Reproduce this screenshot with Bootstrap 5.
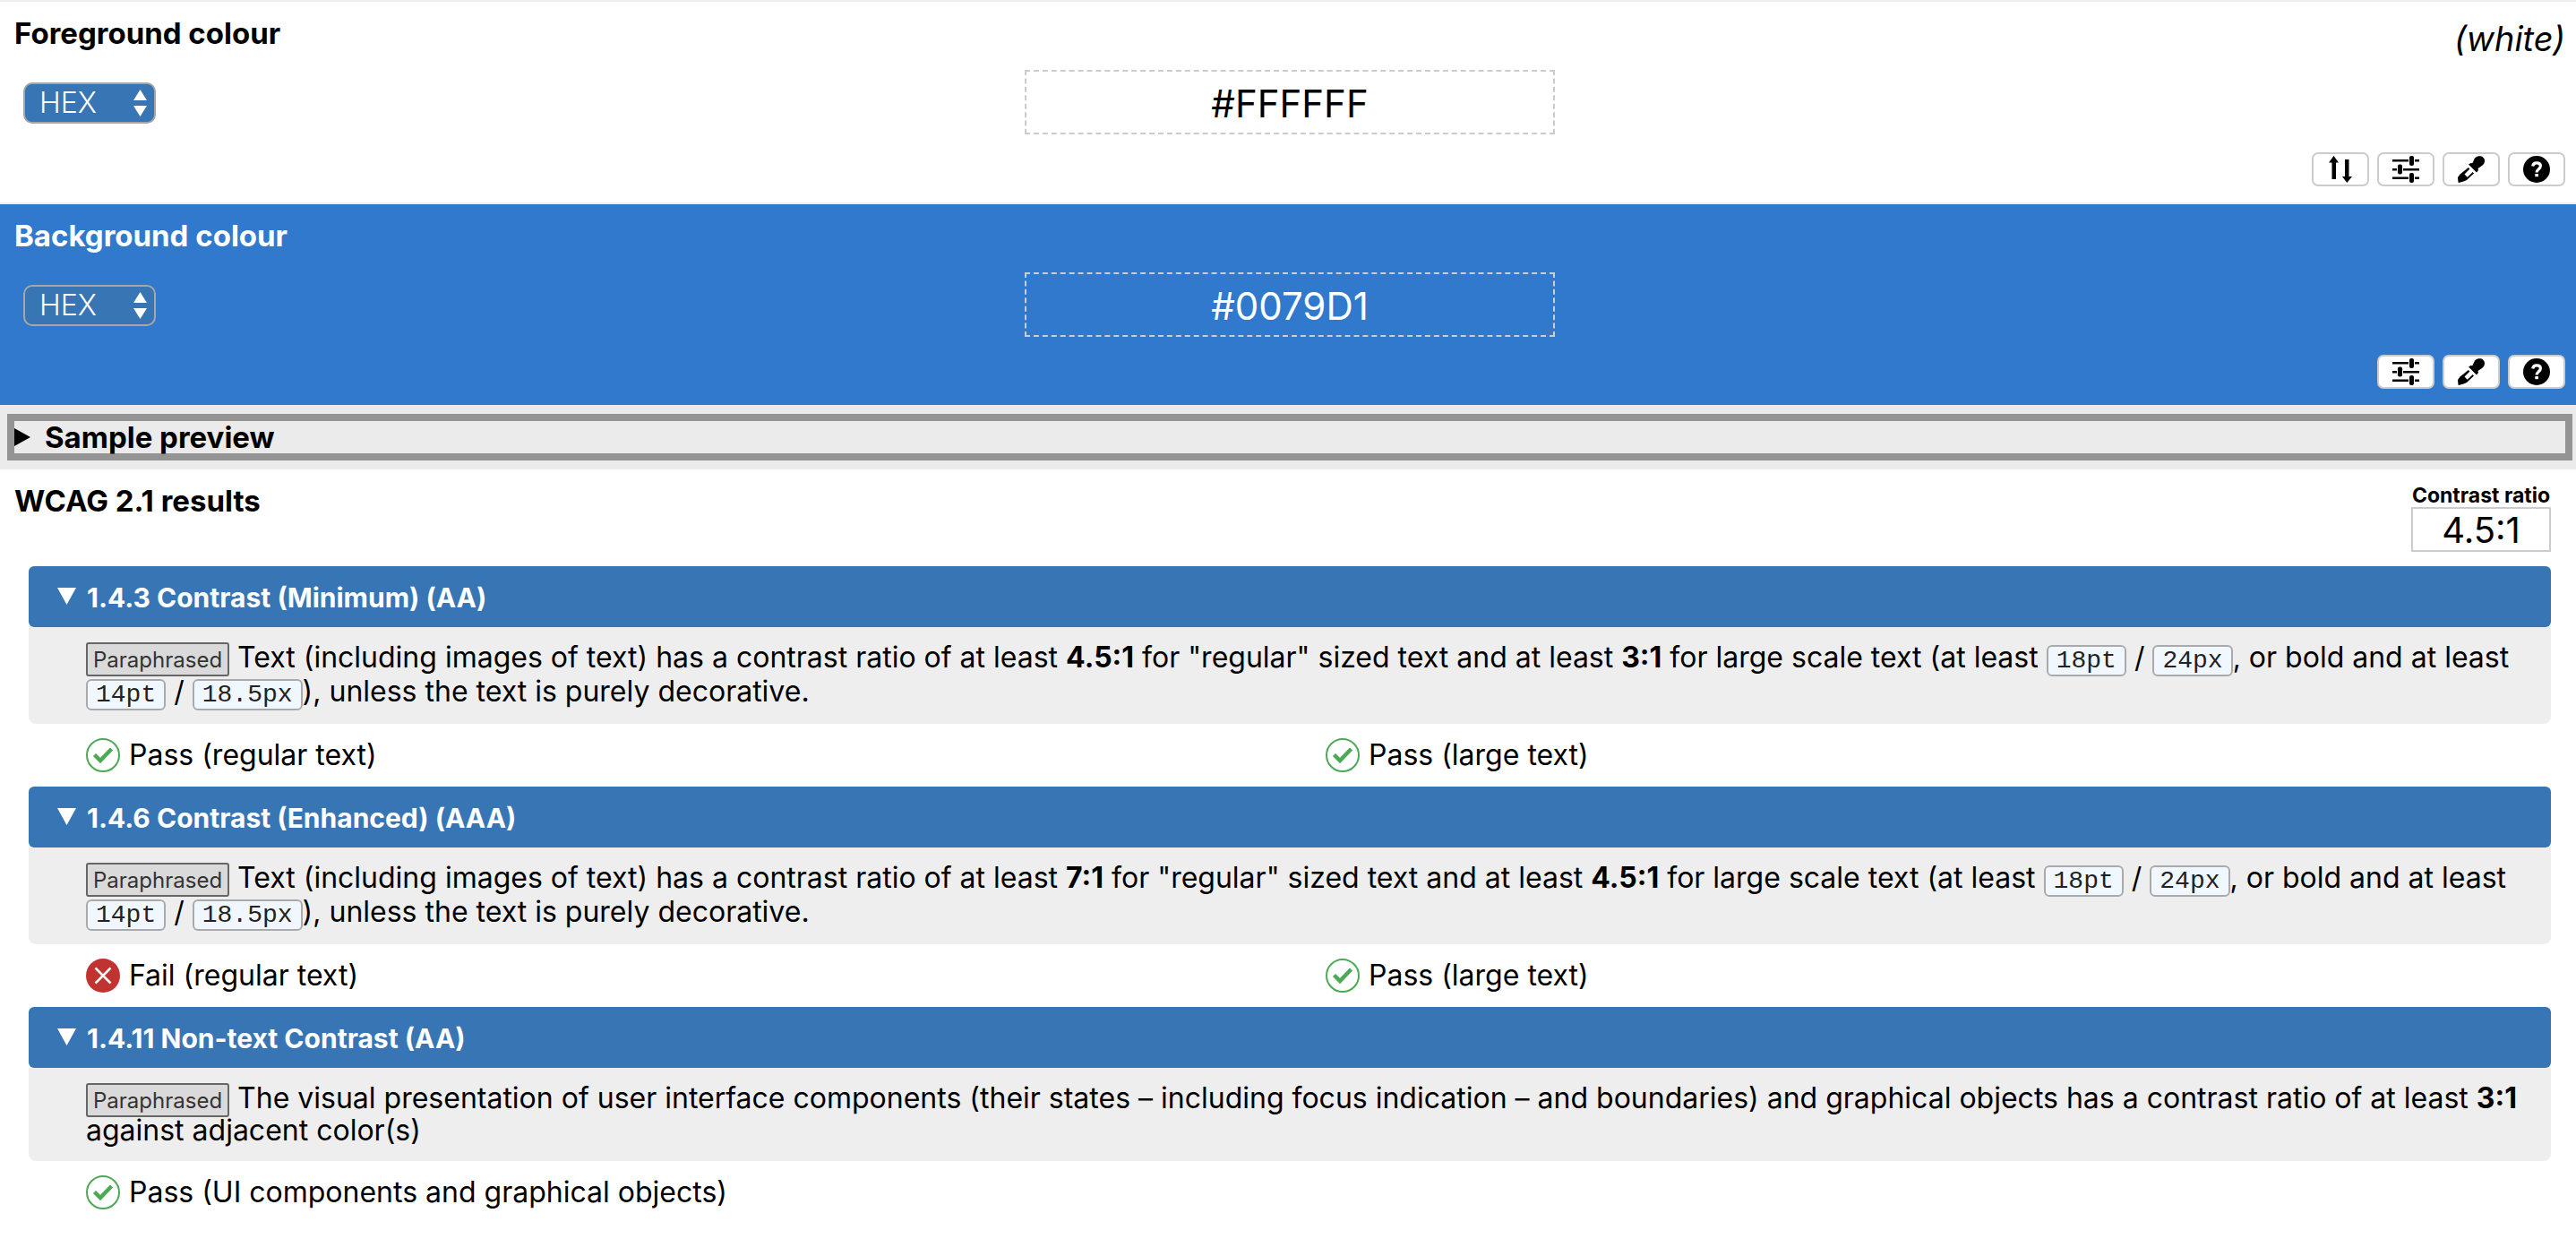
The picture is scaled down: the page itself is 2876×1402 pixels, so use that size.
<!DOCTYPE html>
<html lang="en">
<head>
<meta charset="utf-8">
<meta name="viewport" content="width=device-width, initial-scale=1">
<title>Colour Contrast Analyser</title>
<link href="https://cdn.jsdelivr.net/npm/bootstrap@5.3.0/dist/css/bootstrap.min.css" rel="stylesheet">
<style>
  body { font-family: Inter, "Liberation Sans", sans-serif; font-size: 32px; line-height: 36px; color: #000; background: #fff; }
  .swatch-panel { border-top: 2px solid #eee; padding: 16px 12px 18px 16px; }
  .panel-bg { background: #3079cc; color: #fff; }
  .panel-title { font-size: 33px; line-height: 38px; font-weight: 700; margin: 0; padding-bottom: 2px; }
  .colour-name { font-size: 38px; line-height: 50px; font-style: italic; height: 40px; }
  .value-row { display: grid; grid-template-columns: 1fr 592px 1fr; margin: 20px 0; padding: 0 10px; }
  .format-wrap { position: relative; width: 148px; margin-top: 14px; }
  .format-select { width: 148px; height: 46px; appearance: none; background: #3875b5; color: #fff; border: 2px solid #a6a6a6; border-radius: 10px; padding: 0 16px; font-size: 32px; line-height: 42px; font-weight: 300; display: block; }
  .format-arrows { position: absolute; right: 10px; top: 8px; width: 15px; height: 30px; pointer-events: none; }
  .colour-value { height: 72px; background: transparent; border: 2px dashed #ccc; color: inherit; font-size: 42px; text-align: center; padding: 2px 0 0; }
  .tool-row { gap: 9px; }
  .tool-btn { width: 64px; height: 38px; background: #fff; border: 2px solid #ccc; border-radius: 7px; padding: 0; color: #000; }
  .tool-btn:hover, .tool-btn:active { background: #fff; border-color: #ccc; }
  .tool-btn svg { display: block; width: 30px; height: 30px; margin: 0 auto; }
  .preview-strip { background: #ebebeb; padding: 10px 4px 10px 8px; }
  .preview-strip summary { border: 8px solid #949494; font-size: 33px; line-height: 36px; font-weight: 700; list-style: none; gap: 16px; }
  .results { padding: 16px 28px 0 16px; }
  .ratio-label { font-size: 23px; line-height: 26px; font-weight: 700; }
  .ratio-box { width: 156px; height: 50px; border: 2px solid #ccc; font-size: 40px; line-height: 48px; text-align: center; display: block; }
  .criteria { padding: 0 28px 0 32px; margin-top: 16px; }
  .criteria summary { background: #3875b5; color: #fff; font-size: 30px; line-height: 68px; font-weight: 700; border-radius: 6px; padding: 2px 0 0 32px; height: 68px; list-style: none; gap: 12px; }
  .criteria summary svg { margin-bottom: 4px; }
  .criterion-text { background: #eee; border-radius: 0 0 8px 8px; padding: 16px 16px 16px 64px; margin: 0; }
  .tag-box { font-size: 24px; line-height: 30px; background: #dadada; color: #333; border: 2px solid #666; border-radius: 3px; padding: 3px 6px 2px; }
  .criterion-text code { font-family: "Liberation Mono", monospace; font-size: 28px; line-height: 32px; background: #f0f7ff; color: #222; border: 2px solid #aaa; border-radius: 6px; padding: 0 9px; }
  .verdicts { display: grid; grid-template-columns: 1fr 1fr; gap: 16px; padding: 16px 0 16px 64px; }
  .verdict { gap: 10px; line-height: 38px; }
  .verdict svg { width: 38px; height: 38px; flex: none; }
</style>
<script src="https://cdn.jsdelivr.net/npm/bootstrap@5.3.0/dist/js/bootstrap.bundle.min.js"></script>
</head>
<body>
<svg class="d-none" aria-hidden="true">
  <symbol id="i-arrows" viewBox="0 0 15 30"><path fill="#fff" d="M0 12 7.500 0 15 12zM0 18h15L7.500 30z"/></symbol>
  <symbol id="i-swap" viewBox="0 0 30 30"><path d="M7.500 0 13 7.500h-3V26H5.500V7.500H2zM20 4h4.500v19h3.500L22.300 30 17 23h3z"/></symbol>
  <symbol id="i-sliders" viewBox="0 0 30 30"><path d="M0 4h18v2.500H0zM25 4h5v2.500h-5zM0 14h5v2.500H0zM12 14h18v2.500H12zM0 23.500h18V26H0zM25 23.500h5V26h-5z"/><rect x="19" y="0" width="5" height="11" rx="2"/><rect x="6" y="9.500" width="5" height="11" rx="2"/><rect x="19" y="19" width="5" height="11" rx="2"/></symbol>
  <symbol id="i-dropper" viewBox="0 0 30 30"><path d="M19 2.500C21 .500 23.500 0 25.500.300 28.500.800 30.300 3.500 30 6c-.200 2.500-1.500 3.800-3 5l-4.500 3 .500 2-2 2.500L12 9.500 14.500 8l1.800.200z"/><path d="M12.500 12.500 18.500 19 10 27l-3.500 1.500L1 30l-.500-.500L0 24l2.500-3.500z"/><path d="m14 14 3.200 3.500-6.400 6.200-3.300-3.200z" fill="#fff"/><path d="m11.500 11.500 8 8.500" stroke="#fff" stroke-width="1.500"/></symbol>
  <symbol id="i-help" viewBox="0 0 30 30"><circle cx="15" cy="15" r="15"/><path fill="none" stroke="#fff" stroke-width="3.200" d="M10.700 11.500c.300-3 2.200-3.700 4.400-3.700 2.700 0 4.300 1.500 4.300 3.500 0 3.500-4.300 3.200-4.300 7.200"/><path fill="#fff" d="M13.300 20h3.600v3.200h-3.600z"/></symbol>
  <symbol id="i-pass" viewBox="0 0 38 38"><circle cx="19" cy="19" r="18" fill="#fff" stroke="#4caa55" stroke-width="2"/><path fill="none" stroke="#4caa55" stroke-width="4.500" d="m9.500 18.500 6.500 6.500L28.500 12"/></symbol>
  <symbol id="i-fail" viewBox="0 0 38 38"><circle cx="19" cy="19" r="19" fill="#c03330"/><path fill="none" stroke="#fff" stroke-width="2.500" d="m10.500 10.500 17 17m0-17-17 17"/></symbol>
  <symbol id="i-down" viewBox="0 0 21 19"><path fill="currentColor" d="M0 0h21L10.500 19z"/></symbol>
  <symbol id="i-right" viewBox="0 0 18 20"><path fill="currentColor" d="M0 0v20l18-10z"/></symbol>
</svg>

<section class="swatch-panel" aria-label="Foreground">
  <div class="d-flex justify-content-between">
    <h2 class="panel-title">Foreground colour</h2>
    <span class="colour-name">(white)</span>
  </div>
  <div class="value-row">
    <div class="format-wrap">
      <select class="format-select" aria-label="Foreground format"><option>HEX</option><option>RGB</option><option>HSL</option></select>
      <svg class="format-arrows"><use href="#i-arrows"/></svg>
    </div>
    <input class="colour-value" type="text" value="#FFFFFF" aria-label="Foreground value">
  </div>
  <div class="tool-row d-flex justify-content-end">
    <button type="button" class="btn tool-btn" aria-label="Swap colours"><svg><use href="#i-swap"/></svg></button>
    <button type="button" class="btn tool-btn" aria-label="Foreground sliders"><svg><use href="#i-sliders"/></svg></button>
    <button type="button" class="btn tool-btn" aria-label="Pick foreground"><svg><use href="#i-dropper"/></svg></button>
    <button type="button" class="btn tool-btn" aria-label="Foreground help"><svg><use href="#i-help"/></svg></button>
  </div>
</section>

<section class="swatch-panel panel-bg" aria-label="Background">
  <h2 class="panel-title">Background colour</h2>
  <div class="value-row">
    <div class="format-wrap">
      <select class="format-select" aria-label="Background format"><option>HEX</option><option>RGB</option><option>HSL</option></select>
      <svg class="format-arrows"><use href="#i-arrows"/></svg>
    </div>
    <input class="colour-value" type="text" value="#0079D1" aria-label="Background value">
  </div>
  <div class="tool-row d-flex justify-content-end">
    <button type="button" class="btn tool-btn" aria-label="Background sliders"><svg><use href="#i-sliders"/></svg></button>
    <button type="button" class="btn tool-btn" aria-label="Pick background"><svg><use href="#i-dropper"/></svg></button>
    <button type="button" class="btn tool-btn" aria-label="Background help"><svg><use href="#i-help"/></svg></button>
  </div>
</section>

<details class="preview-strip">
  <summary class="d-flex align-items-center"><svg width="18" height="20"><use href="#i-right"/></svg>Sample preview</summary>
</details>

<main>
  <div class="results d-flex justify-content-between">
    <h2 class="panel-title">WCAG 2.1 results</h2>
    <div class="d-flex flex-column align-items-center">
      <span class="ratio-label" id="ratioLabel">Contrast ratio</span>
      <output class="ratio-box" aria-labelledby="ratioLabel">4.5:1</output>
    </div>
  </div>

  <div class="criteria">
    <details open>
      <summary class="d-flex align-items-center"><svg width="21" height="19"><use href="#i-down"/></svg>1.4.3 Contrast (Minimum) (AA)</summary>
      <p class="criterion-text"><span class="tag-box">Paraphrased</span> Text (including images of text) has a contrast ratio of at least <strong>4.5:1</strong> for "regular" sized text and at least <strong>3:1</strong> for large scale text (at least <code>18pt</code> / <code>24px</code>, or bold and at least <code>14pt</code> / <code>18.5px</code>), unless the text is purely decorative.</p>
      <div class="verdicts">
        <div class="verdict d-flex"><svg><use href="#i-pass"/></svg>Pass (regular text)</div>
        <div class="verdict d-flex"><svg><use href="#i-pass"/></svg>Pass (large text)</div>
      </div>
    </details>
    <details open>
      <summary class="d-flex align-items-center"><svg width="21" height="19"><use href="#i-down"/></svg>1.4.6 Contrast (Enhanced) (AAA)</summary>
      <p class="criterion-text"><span class="tag-box">Paraphrased</span> Text (including images of text) has a contrast ratio of at least <strong>7:1</strong> for "regular" sized text and at least <strong>4.5:1</strong> for large scale text (at least <code>18pt</code> / <code>24px</code>, or bold and at least <code>14pt</code> / <code>18.5px</code>), unless the text is purely decorative.</p>
      <div class="verdicts">
        <div class="verdict d-flex"><svg><use href="#i-fail"/></svg>Fail (regular text)</div>
        <div class="verdict d-flex"><svg><use href="#i-pass"/></svg>Pass (large text)</div>
      </div>
    </details>
    <details open>
      <summary class="d-flex align-items-center"><svg width="21" height="19"><use href="#i-down"/></svg>1.4.11 Non-text Contrast (AA)</summary>
      <p class="criterion-text"><span class="tag-box">Paraphrased</span> The visual presentation of user interface components (their states – including focus indication – and boundaries) and graphical objects has a contrast ratio of at least <strong>3:1</strong> against adjacent color(s)</p>
      <div class="verdicts">
        <div class="verdict d-flex"><svg><use href="#i-pass"/></svg>Pass (UI components and graphical objects)</div>
      </div>
    </details>
  </div>
</main>
</body>
</html>
